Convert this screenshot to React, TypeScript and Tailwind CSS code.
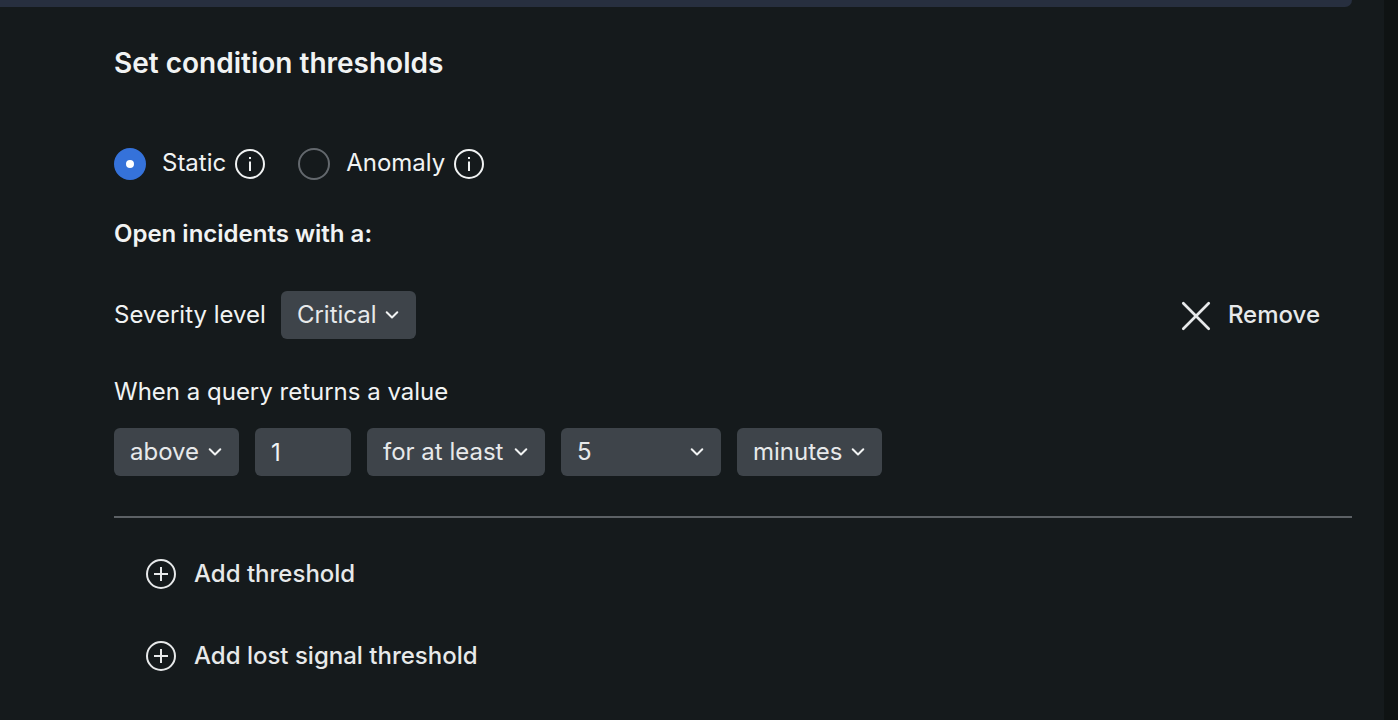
import React, { useState } from "react";

function Chevron({ className }: { className: string }) {
  return (
    <svg
      aria-hidden="true"
      viewBox="0 0 16 16"
      className={`pointer-events-none h-4 w-4 ${className}`}
      fill="none"
      stroke="currentColor"
      strokeWidth="2"
      strokeLinecap="round"
      strokeLinejoin="round"
    >
      <path d="M2.7 5.2 8 10.5l5.3-5.3" />
    </svg>
  );
}

function InfoIcon() {
  return (
    <svg viewBox="0 0 32 32" className="h-8 w-8" fill="none" stroke="currentColor" strokeWidth="2" aria-hidden="true">
      <circle cx="16" cy="16" r="14" />
      <path d="M16 13.5V23M16 9v2" />
    </svg>
  );
}

function PlusIcon() {
  return (
    <svg viewBox="0 0 32 32" className="h-8 w-8" fill="none" stroke="currentColor" strokeWidth="2" aria-hidden="true">
      <circle cx="15" cy="16" r="14" />
      <path d="M15 9v14M8 16h14" />
    </svg>
  );
}

function CloseIcon() {
  return (
    <svg
      viewBox="0 0 32 32"
      className="h-8 w-8"
      fill="none"
      stroke="currentColor"
      strokeWidth="2.7"
      strokeLinecap="round"
      aria-hidden="true"
    >
      <path d="m3.3 4.3 25.4 25.4M28.7 4.3 3.3 29.7" />
    </svg>
  );
}

type SelectProps = {
  id?: string;
  label?: string;
  width: string;
  options: string[];
};

function Select({ id, label, width, options }: SelectProps) {
  return (
    <div className={`grid items-center ${width}`}>
      <select
        id={id}
        aria-label={label}
        className="col-start-1 row-start-1 h-12 w-full appearance-none rounded-md bg-[#3e444a] pr-8 pl-4 text-[#e7e9ea]"
      >
        {options.map((option) => (
          <option key={option}>{option}</option>
        ))}
      </select>
      <Chevron className="col-start-1 row-start-1 mr-4 justify-self-end text-[#f1f3f3]" />
    </div>
  );
}

type ModeProps = {
  value: string;
  label: string;
  checked: boolean;
  onSelect: (value: string) => void;
};

function ModeOption({ value, label, checked, onSelect }: ModeProps) {
  return (
    <div className="flex items-center">
      <input
        id={`mode-${value}`}
        type="radio"
        name="mode"
        checked={checked}
        onChange={() => onSelect(value)}
        className="h-8 w-8 appearance-none rounded-full border-2 border-[#63686d] checked:border-12 checked:border-[#3572da] checked:bg-white"
      />
      <label htmlFor={`mode-${value}`} className="pb-0.5 pl-4">
        {label}
      </label>
      <button type="button" aria-label={`About ${label}`} className="ml-2">
        <InfoIcon />
      </button>
    </div>
  );
}

export default function App() {
  const [mode, setMode] = useState("static");

  return (
    <div className="flex min-h-screen bg-[#151a1c] font-['Inter',sans-serif] text-2xl leading-8 text-[#f1f3f3]">
      <main className="min-w-0 flex-1 pr-8">
        <div className="h-[7px] rounded-br-lg bg-[#272f3f]" />
        <form className="pl-[114px]">
          <h2 className="pt-[38px] text-[28px] leading-9 font-semibold">Set condition thresholds</h2>

          <div className="mt-[66px] flex gap-8">
            <ModeOption value="static" label="Static" checked={mode === "static"} onSelect={setMode} />
            <ModeOption value="anomaly" label="Anomaly" checked={mode === "anomaly"} onSelect={setMode} />
          </div>

          <h3 className="mt-[37px] font-semibold">Open incidents with a:</h3>

          <div className="mt-[41px] flex items-center justify-between">
            <div className="flex items-center gap-[15px]">
              <label htmlFor="severity">Severity level</label>
              <Select id="severity" width="w-[135px]" options={["Critical", "Warning"]} />
            </div>
            <button type="button" className="flex items-center gap-4 pr-8 font-medium text-[#e7e9ea]">
              <CloseIcon />
              Remove
            </button>
          </div>

          <p className="mt-[37px]">When a query returns a value</p>
          <div className="mt-5 flex gap-4">
            <Select label="Operator" width="w-[125px]" options={["above", "below", "equals"]} />
            <input
              type="text"
              aria-label="Threshold value"
              defaultValue="1"
              className="h-12 w-24 rounded-md bg-[#3e444a] px-4"
            />
            <Select label="Occurrence" width="w-[178px]" options={["for at least", "at least once in"]} />
            <Select label="Duration" width="w-40" options={["5", "10", "15"]} />
            <Select label="Duration unit" width="w-[145px]" options={["minutes", "hours"]} />
          </div>

          <hr className="mt-10 border-t-2 border-[#5c6165]" />

          <div className="mt-10 flex flex-col items-start gap-[50px] pl-8 font-medium text-[#e7e9ea]">
            <button type="button" className="flex items-center gap-4">
              <PlusIcon />
              Add threshold
            </button>
            <button type="button" className="flex items-center gap-4">
              <PlusIcon />
              Add lost signal threshold
            </button>
          </div>
        </form>
      </main>
      <div className="w-3.5 bg-[#0f1313]" />
    </div>
  );
}
